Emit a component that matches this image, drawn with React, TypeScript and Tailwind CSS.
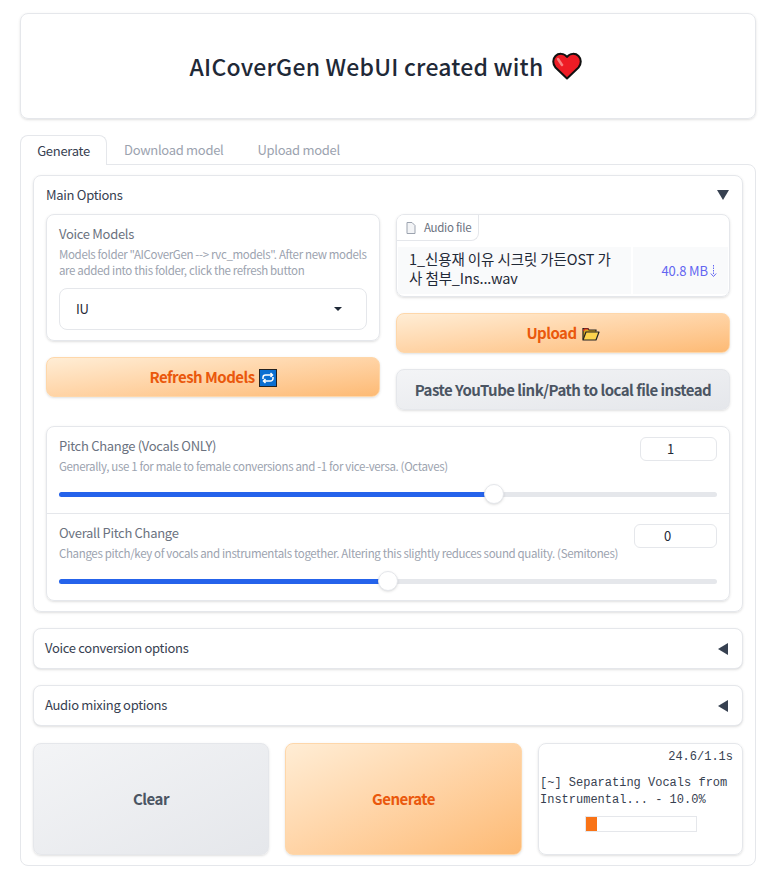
const SANS = "font-['Noto_Sans_CJK_KR','Noto_Sans',sans-serif]";

const SLIDERS = [
  {
    title: "Pitch Change (Vocals ONLY)",
    info: "Generally, use 1 for male to female conversions and -1 for vice-versa. (Octaves)",
    value: 1,
    inputWidth: "w-[77px]",
    percent: 66.1,
  },
  {
    title: "Overall Pitch Change",
    info: "Changes pitch/key of vocals and instrumentals together. Altering this slightly reduces sound quality. (Semitones)",
    value: 0,
    inputWidth: "w-[83px]",
    percent: 50,
  },
];

const BODY = "text-[13px] tracking-[-0.3px]";
const INFO = "text-[11.500px] leading-[16px] tracking-[-0.35px] text-[#9ca3af] whitespace-nowrap";
const BUTTON = "text-[15px] tracking-[-0.52px] font-semibold shadow-sm pt-px";
const PRIMARY = `${BUTTON} bg-gradient-to-br from-[#ffedd5] to-[#fdba74] border border-[#fed7aa] text-[#ea580c]`;
const SECONDARY = `${BUTTON} bg-gradient-to-br from-[#f3f4f6] to-[#e5e7eb] border border-[#e5e7eb] text-[#4b5563]`;

function Heart() {
  return (
    <svg width="30" height="28" viewBox="0 0 30 28" className="shrink-0">
      <path
        d="M15 26.500 3.500 15.500C.5 12 .5 7 3.500 4s8.500-3 11.500 1c3-4 8.500-4 11.500-1s3 8 0 11.500z"
        fill="#ee1c25"
        stroke="#111"
        strokeWidth="2"
        strokeLinejoin="round"
      />
      <path d="M6 7l4 6" stroke="#f98080" strokeWidth="2.500" strokeLinecap="round" />
    </svg>
  );
}

function Folder() {
  return (
    <svg width="18" height="14" viewBox="0 0 18 14">
      <path d="M1 12.500V1.500h5l1 1.500h7v1.500" fill="#d9a520" stroke="#222" strokeWidth="1.200" />
      <path d="M1.500 4l1-2h4" fill="none" stroke="#d22" strokeWidth="1.200" />
      <path d="M4 5h13l-3 8H1z" fill="#fcd34d" stroke="#222" strokeWidth="1.200" strokeLinejoin="round" />
    </svg>
  );
}

function Repeat() {
  return (
    <svg width="18" height="18" viewBox="0 0 18 18">
      <rect x=".5" y=".5" width="17" height="17" fill="#0b6fd1" stroke="#222" />
      <path
        d="M4 10V8.500A2.500 2.500 0 0 1 6.500 6H13M11.500 4 13.500 6l-2 2M14 8v1.500A2.500 2.500 0 0 1 11.500 12H5M6.500 10l-2 2 2 2"
        fill="none"
        stroke="#fff"
        strokeWidth="1.500"
      />
    </svg>
  );
}

function DownloadArrow() {
  return (
    <svg width="7" height="14" viewBox="0 0 7 14" fill="none" stroke="#6366f1">
      <path d="M3.500 1v9" strokeDasharray="1.500 1" />
      <path d="M.8 9.500 3.500 12.500 6.200 9.500" />
    </svg>
  );
}

function Triangle({ open }: { open?: boolean }) {
  return open ? (
    <span className="w-0 h-0 border-x-[6px] border-x-transparent border-t-[10px] border-t-[#374151]" />
  ) : (
    <span className="w-0 h-0 border-y-[6px] border-y-transparent border-r-[10px] border-r-[#374151]" />
  );
}

function Slider({ percent }: { percent: number }) {
  return (
    <div className="relative h-[5px] rounded-full bg-[#e5e7eb] mt-[18px]">
      <div className="h-full rounded-full bg-[#2563eb]" style={{ width: `${percent}%` }} />
      <div
        className="absolute top-[-8px] w-[20px] h-[20px] -ml-[10px] rounded-full bg-white border border-[#e5e7eb] shadow-sm"
        style={{ left: `${percent}%` }}
      />
    </div>
  );
}

function ClosedAccordion({ title }: { title: string }) {
  return (
    <div className={`${BODY} flex justify-between items-center h-[41px] pl-[11px] pr-[14px] bg-white border border-[#e5e7eb] rounded-[8px] shadow-sm text-[#374151]`}>
      <span className="-mt-[2px]">{title}</span>
      <Triangle />
    </div>
  );
}

export default function App() {
  return (
    <div className={`${SANS} w-[769px] h-[875px] bg-white px-[20px] pt-[13px] overflow-hidden`}>
      <header className="flex justify-center items-center gap-[9px] w-[736px] h-[106px] pr-[4px] border border-[#e5e7eb] rounded-[8px] shadow-sm">
        <h1 className="text-[23px] leading-[32px] tracking-[0.2px] font-medium text-[#1f2937]">AICoverGen WebUI created with</h1>
        <Heart />
      </header>

      {/* Tabs */}
      <nav className={`${BODY} flex w-[736px] h-[30px] mt-[16px] text-[#9ca3af]`}>
        <div className="relative z-10 flex items-center justify-center w-[87px] h-[30px] bg-white border border-b-0 border-[#e5e7eb] rounded-t-[8px] text-[#374151]">
          Generate
        </div>
        <div className="flex items-center px-[17px]">Download model</div>
        <div className="flex items-center px-[17px]">Upload model</div>
      </nav>

      <main className="flex flex-col gap-[16px] -mt-px w-[736px] h-[702px] border border-[#e5e7eb] rounded-b-[8px] rounded-tr-[8px] px-[12px] py-[10px]">
        <section className="h-[437px] border border-[#e5e7eb] rounded-[8px] shadow-sm px-[12px] pt-[9px]">
          <div className={`${BODY} flex justify-between items-center h-[20px] pr-px text-[#374151]`}>
            <span>Main Options</span>
            <Triangle open />
          </div>

          <div className="grid grid-cols-2 gap-[16px] mt-[9px]">
            <div className="flex flex-col gap-[16px]">
              <div className="h-[127px] border border-[#e5e7eb] rounded-[8px] shadow-sm px-[12px] pt-[9px]">
                <div className={`${BODY} leading-[20px] text-[#6b7280]`}>Voice Models</div>
                <p className={`${INFO} mt-[2px]`}>
                  Models folder "AICoverGen --&gt; rvc_models". After new models
                  <br />
                  are added into this folder, click the refresh button
                </p>
                <div className={`${BODY} flex justify-between items-center h-[42px] mt-[10px] border border-[#e5e7eb] rounded-[8px] pl-[16px] pr-[24px] text-[#1f2937]`}>
                  <span>IU</span>
                  <span className="w-0 h-0 border-x-[4px] border-x-transparent border-t-[4px] border-t-[#1f2937]" />
                </div>
              </div>
              <button className={`${PRIMARY} flex justify-center items-center gap-[4px] h-[40px] rounded-[8px]`}>
                Refresh Models <Repeat />
              </button>
            </div>

            <div className="flex flex-col gap-[16px]">
              <div className="h-[83px] border border-[#e5e7eb] rounded-[8px] shadow-sm overflow-hidden">
                <div className="flex items-center gap-[8px] w-[82px] h-[26px] pl-[9px] bg-white border-r border-b border-[#e5e7eb] rounded-br-[8px] text-[11.500px] tracking-[-0.3px] text-[#6b7280]">
                  <svg width="10" height="12" viewBox="0 0 10 12" fill="#f3f4f6" stroke="#9ca3af">
                    <path d="M1 .5h5l3 3V11.500H1z" />
                  </svg>
                  Audio file
                </div>
                <div className="flex gap-[2px] h-[47px] mt-[6px] mx-px text-[14.500px] tracking-[-0.1px] text-[#1f2937]">
                  <div className="flex-1 bg-[#f9fafb] pl-[11px] pr-[12px] leading-[19px] pt-[2px]">
                    1_신용재 이유 시크릿 가든OST 가
                    <br />
                    사 첨부_Ins...wav
                  </div>
                  <div className="flex items-center justify-end gap-[2px] w-[95px] pr-[11px] bg-[#f9fafb] text-[#6366f1] text-[13px]">
                    40.8 MB
                    <DownloadArrow />
                  </div>
                </div>
              </div>
              <button className={`${PRIMARY} flex justify-center items-center gap-[5px] h-[40px] rounded-[8px]`}>
                Upload <Folder />
              </button>
              <button className={`${SECONDARY} h-[41px] rounded-[8px] whitespace-nowrap`}>
                Paste YouTube link/Path to local file instead
              </button>
            </div>
          </div>

          <div className="mt-[16px] border border-[#e5e7eb] rounded-[8px] shadow-sm divide-y divide-[#e5e7eb]">
            {SLIDERS.map((slider) => (
              <div key={slider.title} className="h-[86px] first:h-[87px] px-[12px] pt-[9px]">
                <div className="flex justify-between items-start">
                  <div>
                    <div className={`${BODY} leading-[20px] text-[#6b7280]`}>{slider.title}</div>
                    <p className={`${INFO} mt-[2px]`}>{slider.info}</p>
                  </div>
                  <div
                    className={`${slider.inputWidth} shrink-0 flex justify-center items-center h-[24px] mt-px pr-[16px] border border-[#e5e7eb] rounded-[6px] text-[13px] text-[#1f2937]`}
                  >
                    {slider.value}
                  </div>
                </div>
                <Slider percent={slider.percent} />
              </div>
            ))}
          </div>
        </section>

        <ClosedAccordion title="Voice conversion options" />
        <ClosedAccordion title="Audio mixing options" />

        <div className="flex gap-[16px] h-[112px] mt-px">
          <button className={`${SECONDARY} w-[236px] rounded-[8px]`}>Clear</button>
          <button className={`${PRIMARY} w-[237px] rounded-[8px]`}>Generate</button>
          <div className="flex-1 border border-[#e5e7eb] rounded-[8px] shadow-sm font-['Liberation_Mono',monospace] text-[12px] leading-[17px] text-[#374151] pt-[5px] px-[1px]">
            <div className="text-right pr-[8px]">24.6/1.1s</div>
            <div className="mt-[9px]">
              [~] Separating Vocals from
              <br />
              Instrumental... - 10.0%
            </div>
            <div className="w-[112px] h-[16px] mt-[7px] ml-[45px] border border-[#e5e7eb]">
              <div className="w-[10%] h-full bg-[#f97316]" />
            </div>
          </div>
        </div>
      </main>
    </div>
  );
}
